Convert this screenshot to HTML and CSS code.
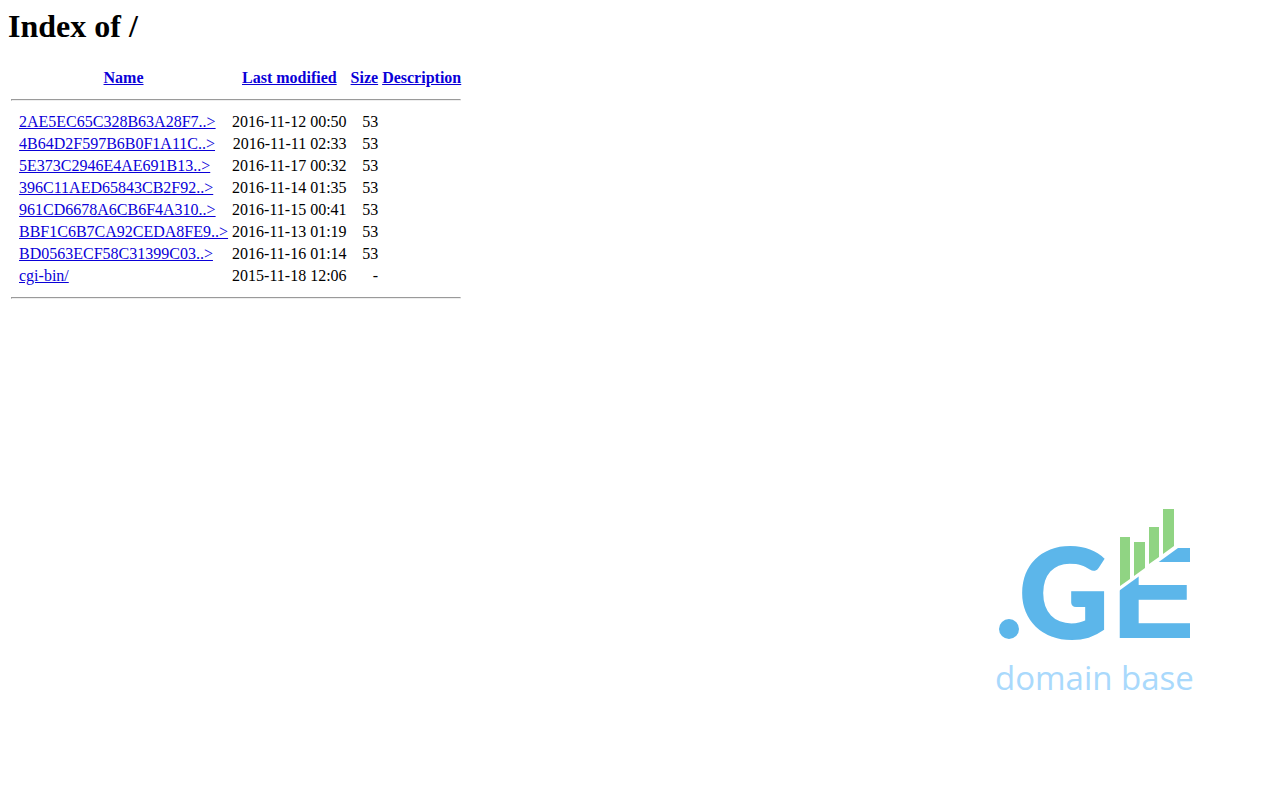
FILE: index.html
```html
<!DOCTYPE html>
<html lang="en">

<head>
  <meta charset="utf-8">
  <meta name="viewport" content="width=device-width, initial-scale=1.0" />
  <title>Index of /</title>
  <link rel="stylesheet" href="styles.css">
</head>

<body>
  <h1>Index of /</h1>
  <table class="listing">
    <tr>
      <th>&nbsp;</th>
      <th><a href="?C=N;O=D">Name</a></th>
      <th><a href="?C=M;O=A">Last modified</a></th>
      <th><a href="?C=S;O=A">Size</a></th>
      <th><a href="?C=D;O=A">Description</a></th>
    </tr>
    <tr><th colspan="5"><hr></th></tr>
    <tr><td>&nbsp;</td><td><a href="#">2AE5EC65C328B63A28F7..&gt;</a></td><td class="num">2016-11-12 00:50</td><td class="num">53</td><td></td></tr>
    <tr><td>&nbsp;</td><td><a href="#">4B64D2F597B6B0F1A11C..&gt;</a></td><td class="num">2016-11-11 02:33</td><td class="num">53</td><td></td></tr>
    <tr><td>&nbsp;</td><td><a href="#">5E373C2946E4AE691B13..&gt;</a></td><td class="num">2016-11-17 00:32</td><td class="num">53</td><td></td></tr>
    <tr><td>&nbsp;</td><td><a href="#">396C11AED65843CB2F92..&gt;</a></td><td class="num">2016-11-14 01:35</td><td class="num">53</td><td></td></tr>
    <tr><td>&nbsp;</td><td><a href="#">961CD6678A6CB6F4A310..&gt;</a></td><td class="num">2016-11-15 00:41</td><td class="num">53</td><td></td></tr>
    <tr><td>&nbsp;</td><td><a href="#">BBF1C6B7CA92CEDA8FE9..&gt;</a></td><td class="num">2016-11-13 01:19</td><td class="num">53</td><td></td></tr>
    <tr><td>&nbsp;</td><td><a href="#">BD0563ECF58C31399C03..&gt;</a></td><td class="num">2016-11-16 01:14</td><td class="num">53</td><td></td></tr>
    <tr><td>&nbsp;</td><td><a href="cgi-bin/">cgi-bin/</a></td><td class="num">2015-11-18 12:06</td><td class="num">-</td><td></td></tr>
    <tr><th colspan="5"><hr></th></tr>
  </table>

  <footer class="brand">
    <svg class="logo" width="200" height="190" viewBox="0 0 200 190">
      <defs>
        <!-- everything under the chart line -->
        <clipPath id="under-line">
          <path d="M120 85 L182 40 H194 V140 H120 Z" />
        </clipPath>
      </defs>
      <circle class="blue" cx="13" cy="121" r="10" />
      <text class="letter-g" x="23" y="130">G</text>
      <g clip-path="url(#under-line)">
        <text class="letter-e" x="115" y="130">E</text>
      </g>
      <path class="bars" d="M124 29 H134 V71 L124 78 Z
        M138 34 H149 V60 L138 68 Z
        M153 19 H163 V49 L153 56 Z
        M167 1 H178 V38 L167 46 Z" />
      <text class="tagline" x="-1" y="182">domain base</text>
    </svg>
  </footer>
</body>

</html>
```
FILE: styles.css
```css
body {
  margin: 8px;
  background: #fff;
  color: #000;
  font-family: "Liberation Serif", "Times New Roman", serif;
  font-size: 16px;
}

h1 {
  margin: 0 0 21px;
  font-size: 32px;
}

a {
  color: #0a00d8;
}

.listing {
  border-spacing: 2px;
}

.listing .num {
  text-align: right;
}

.brand {
  display: flex;
  justify-content: flex-end;
  padding: 198px 76px 0 0;
}

.logo {
  display: block;
  overflow: visible;
}

.blue,
.letter-g,
.letter-e {
  fill: #5cb6ea;
}

.letter-g {
  stroke: #5cb6ea;
  stroke-width: 2px;
  font-family: Lato, sans-serif;
  font-size: 124px;
  font-weight: 900;
}

.letter-e {
  font-family: "Liberation Sans", Arial, sans-serif;
  font-size: 131px;
  font-weight: bold;
}

.bars {
  fill: #90d483;
}

.tagline {
  fill: #a9d9fc;
  font-family: "Open Sans", sans-serif;
  font-size: 33px;
}
```
